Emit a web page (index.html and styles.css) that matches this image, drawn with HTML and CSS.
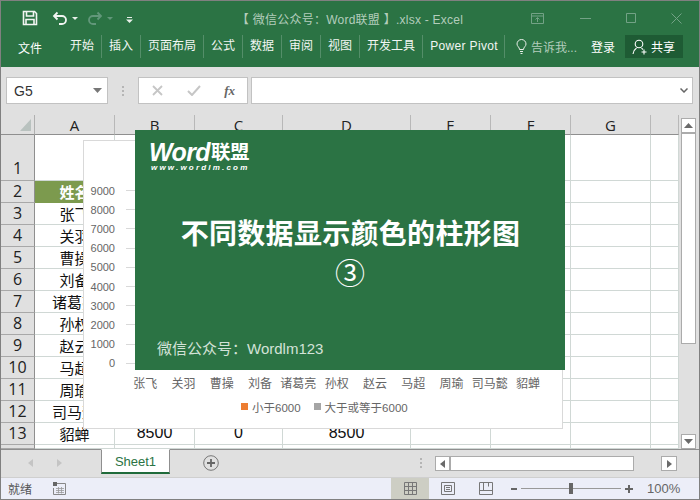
FILE: index.html
```html
<!DOCTYPE html>
<html lang="zh-CN">
<head>
<meta charset="utf-8">
<title>Excel</title>
<link rel="stylesheet" href="styles.css">
</head>
<body>
<div class="window">
  <header class="head">
    <div class="titlebar">
      <div class="qat">
        <svg class="ic-save" width="16" height="16" viewBox="0 0 16 16"><path d="M1.500 1.500h11l2 2v11h-13z" fill="none" stroke="#f1f5f2" stroke-width="1.600"/><path d="M4.500 1.500v4.500h7v-4.500M4 14.500v-5h8v5" fill="none" stroke="#f1f5f2" stroke-width="1.600"/></svg>
        <svg class="ic-undo" width="16" height="14" viewBox="0 0 16 14"><path d="M5.500 1.500 2 5l3.500 3.500M2.500 5H10a4 4 0 0 1 0 8H7" fill="none" stroke="#f1f5f2" stroke-width="1.800"/></svg>
        <svg class="ic-drop" width="6" height="3" viewBox="0 0 6 3"><path d="M0 0h6L3 3z" fill="#e8efe9"/></svg>
        <svg class="ic-redo" width="16" height="14" viewBox="0 0 16 14"><path d="M10.500 1.500 14 5l-3.500 3.500M13.500 5H6a4 4 0 0 0 0 8h3" fill="none" stroke="#62977a" stroke-width="1.800"/></svg>
        <svg class="ic-drop" width="6" height="3" viewBox="0 0 6 3"><path d="M0 0h6L3 3z" fill="#62977a"/></svg>
        <svg class="ic-custom" width="7" height="6" viewBox="0 0 7 6"><path d="M1 .5h5" stroke="#e8efe9"/><path d="M0 2.500h7L3.500 6z" fill="#e8efe9"/></svg>
      </div>
      <div class="doc-title">【 微信公众号：Word联盟 】.xlsx - Excel</div>
      <div class="winbtns">
        <svg width="13" height="11" viewBox="0 0 13 11"><path d="M.5.500h12v10H.5zM.5 3h12M6.500 9V5M4.500 6.500l2-2 2 2" fill="none" stroke="#73a286"/></svg>
        <svg class="btn-min" width="11" height="1" viewBox="0 0 11 1"><path d="M0 .5h11" stroke="#73a286"/></svg>
        <svg class="btn-max" width="10" height="10" viewBox="0 0 10 10"><path d="M.5.500h9v9h-9z" fill="none" stroke="#73a286"/></svg>
        <svg class="btn-close" width="11" height="11" viewBox="0 0 11 11"><path d="M.5.500l10 10M10.500.5l-10 10" stroke="#73a286"/></svg>
      </div>
    </div>
    <nav class="ribbon">
      <span class="tab-file">文件</span>
      <div class="tabs">
        <span class="tab">开始</span><span class="tab">插入</span><span class="tab">页面布局</span><span class="tab">公式</span><span class="tab">数据</span><span class="tab">审阅</span><span class="tab">视图</span><span class="tab">开发工具</span><span class="tab tab-en">Power Pivot</span>
      </div>
      <svg class="bulb" width="11" height="15" viewBox="0 0 11 15"><path d="M3.500 10.500C3.500 8 1 7.500 1 5a4.500 4.500 0 0 1 9 0c0 2.500-2.500 3-2.500 5.500zM4 12.500h3M4.500 14.500h2" fill="none" stroke="#e8efe9"/></svg>
      <span class="tell">告诉我...</span>
      <span class="login">登录</span>
      <span class="share">
        <svg width="16" height="16" viewBox="0 0 16 16"><circle cx="7" cy="5" r="3.800" fill="none" stroke="#fff" stroke-width="1.100"/><path d="M1 15c.5-3.500 2-5 3.500-6M9.500 9.200 11 10.500M12 10.500v5M9.500 13h5" fill="none" stroke="#fff" stroke-width="1.100"/></svg>
        共享
      </span>
    </nav>
  </header>

  <div class="formula">
    <div class="namebox"><span>G5</span><svg width="9" height="5" viewBox="0 0 9 5"><path d="M0 0h9L4.500 5z" fill="#777"/></svg></div>
    <div class="grip"><i></i><i></i><i></i></div>
    <div class="fxbox">
      <svg width="11" height="11" viewBox="0 0 11 11"><path d="M1 1l9 9M10 1l-9 9" stroke="#c6c6c6" stroke-width="1.800"/></svg>
      <svg width="14" height="11" viewBox="0 0 14 11"><path d="M1 6l4 4 8-9" fill="none" stroke="#c6c6c6" stroke-width="2"/></svg>
      <span class="fx">fx</span>
    </div>
    <div class="input"><svg width="8" height="5" viewBox="0 0 8 5"><path d="M.5.500 4 4 7.500.5" fill="none" stroke="#666" stroke-width="1.500"/></svg></div>
  </div>

  <div class="workarea">
    <div class="sheet">
      <div class="grid">
        <div class="corner"><svg width="11" height="12" viewBox="0 0 11 12"><path d="M11 0v12H0z" fill="#b9c2bf"/></svg></div>
        <div class="ch">A</div><div class="ch">B</div><div class="ch">C</div><div class="ch">D</div><div class="ch">E</div><div class="ch">F</div><div class="ch">G</div><div class="ch"></div>

        <div class="rh rh-tall">1</div><div class="c"></div><div class="c"></div><div class="c"></div><div class="c"></div><div class="c"></div><div class="c"></div><div class="c"></div><div class="c"></div>
        <div class="rh">2</div><div class="c c-head">姓名</div><div class="c"></div><div class="c"></div><div class="c"></div><div class="c"></div><div class="c"></div><div class="c"></div><div class="c"></div>
        <div class="rh">3</div><div class="c">张飞</div><div class="c"></div><div class="c"></div><div class="c"></div><div class="c"></div><div class="c"></div><div class="c"></div><div class="c"></div>
        <div class="rh">4</div><div class="c">关羽</div><div class="c"></div><div class="c"></div><div class="c"></div><div class="c"></div><div class="c"></div><div class="c"></div><div class="c"></div>
        <div class="rh">5</div><div class="c">曹操</div><div class="c"></div><div class="c"></div><div class="c"></div><div class="c"></div><div class="c"></div><div class="c"></div><div class="c"></div>
        <div class="rh">6</div><div class="c">刘备</div><div class="c"></div><div class="c"></div><div class="c"></div><div class="c"></div><div class="c"></div><div class="c"></div><div class="c"></div>
        <div class="rh">7</div><div class="c">诸葛亮</div><div class="c"></div><div class="c"></div><div class="c"></div><div class="c"></div><div class="c"></div><div class="c"></div><div class="c"></div>
        <div class="rh">8</div><div class="c">孙权</div><div class="c"></div><div class="c"></div><div class="c"></div><div class="c"></div><div class="c"></div><div class="c"></div><div class="c"></div>
        <div class="rh">9</div><div class="c">赵云</div><div class="c"></div><div class="c"></div><div class="c"></div><div class="c"></div><div class="c"></div><div class="c"></div><div class="c"></div>
        <div class="rh">10</div><div class="c">马超</div><div class="c"></div><div class="c"></div><div class="c"></div><div class="c"></div><div class="c"></div><div class="c"></div><div class="c"></div>
        <div class="rh">11</div><div class="c">周瑜</div><div class="c"></div><div class="c"></div><div class="c"></div><div class="c"></div><div class="c"></div><div class="c"></div><div class="c"></div>
        <div class="rh">12</div><div class="c">司马懿</div><div class="c"></div><div class="c"></div><div class="c"></div><div class="c"></div><div class="c"></div><div class="c"></div><div class="c"></div>
        <div class="rh">13</div><div class="c">貂蝉</div><div class="c c-num">8500</div><div class="c c-num">0</div><div class="c c-num">8500</div><div class="c"></div><div class="c"></div><div class="c"></div><div class="c"></div>
        <div class="rh"></div><div class="c"></div><div class="c"></div><div class="c"></div><div class="c"></div><div class="c"></div><div class="c"></div><div class="c"></div><div class="c"></div>
      </div>

      <div class="chart">
        <div class="axis">
          <div class="tick"><span>9000</span><i></i></div>
          <div class="tick"><span>8000</span><i></i></div>
          <div class="tick"><span>7000</span><i></i></div>
          <div class="tick"><span>6000</span><i></i></div>
          <div class="tick"><span>5000</span><i></i></div>
          <div class="tick"><span>4000</span><i></i></div>
          <div class="tick"><span>3000</span><i></i></div>
          <div class="tick"><span>2000</span><i></i></div>
          <div class="tick"><span>1000</span><i></i></div>
          <div class="tick"><span>0</span><i></i></div>
        </div>
        <div class="cats">
          <span>张飞</span><span>关羽</span><span>曹操</span><span>刘备</span><span>诸葛亮</span><span>孙权</span><span>赵云</span><span>马超</span><span>周瑜</span><span>司马懿</span><span>貂蝉</span>
        </div>
        <div class="legend">
          <i class="sw sw-orange"></i><span>小于6000</span>
          <i class="sw sw-gray"></i><span>大于或等于6000</span>
        </div>
      </div>

      <div class="banner">
        <div class="logo">
          <div class="logo-main"><span class="logo-word">Word</span><span class="logo-cn">联盟</span></div>
          <div class="logo-url">www.wordlm.com</div>
        </div>
        <h1 class="b-title">不同数据显示颜色的柱形图</h1>
        <div class="b-num">③</div>
        <div class="b-foot">微信公众号：Wordlm123</div>
      </div>
    </div>

    <div class="vscroll">
      <div class="sbtn"><svg width="9" height="5" viewBox="0 0 9 5"><path d="M4.500 0 9 5H0z" fill="#6a6a6a"/></svg></div>
      <div class="vthumb"></div>
      <div class="vtrack"></div>
      <div class="sbtn"><svg width="9" height="5" viewBox="0 0 9 5"><path d="M0 0h9L4.500 5z" fill="#6a6a6a"/></svg></div>
    </div>
  </div>

  <div class="tabbar">
    <div class="nav">
      <svg width="5" height="8" viewBox="0 0 5 8"><path d="M5 0v8L0 4z" fill="#c4c4c4"/></svg>
      <svg width="5" height="8" viewBox="0 0 5 8"><path d="M0 0v8l5-4z" fill="#c4c4c4"/></svg>
    </div>
    <div class="sheet-tab">Sheet1</div>
    <svg class="plus" width="16" height="16" viewBox="0 0 16 16"><circle cx="8" cy="8" r="7.300" fill="none" stroke="#777"/><path d="M8 4v8M4 8h8" stroke="#666" stroke-width="1.800"/></svg>
    <div class="grip grip-h"><i></i><i></i><i></i></div>
    <div class="hscroll">
      <div class="hbtn"><svg width="5" height="8" viewBox="0 0 5 8"><path d="M5 0v8L0 4z" fill="#6a6a6a"/></svg></div>
      <div class="hthumb"></div>
      <div class="htrack"></div>
      <div class="hbtn hbtn-r"><svg width="5" height="8" viewBox="0 0 5 8"><path d="M0 0v8l5-4z" fill="#6a6a6a"/></svg></div>
    </div>
  </div>

  <footer class="status">
    <span class="ready">就绪</span>
    <svg class="macro" width="13" height="13" viewBox="0 0 13 13"><path d="M3 1.500h9.500v11H.5V6" fill="none" stroke="#888"/><path d="M0 0h4v4H0z" fill="#666"/><path d="M3 6.500h8M3 8.500h8M3 10.500h8M5.500 5v6.500M8.500 5v6.500" stroke="#999" stroke-width=".8"/></svg>
    <div class="view view-on"><svg width="13" height="13" viewBox="0 0 13 13"><path d="M.5.500h12v12H.5zM.5 4.500h12M.5 8.500h12M4.500.500v12M8.500.500v12" fill="none" stroke="#777"/></svg></div>
    <div class="view"><svg width="14" height="13" viewBox="0 0 14 13"><path d="M.5.500h13v12H.5zM3.500 3.500h7v6h-7zM5 5.500h4M5 7.500h4" fill="none" stroke="#777"/></svg></div>
    <div class="view"><svg width="14" height="13" viewBox="0 0 14 13"><path d="M.5.500h13v12H.5zM.5 8.500h13M4.500.500v8M9.500.500v4" fill="none" stroke="#777"/></svg></div>
    <div class="zoom">
      <i class="z-minus"></i>
      <div class="z-track"><i class="z-thumb"></i></div>
      <svg class="z-plus" width="8" height="8" viewBox="0 0 8 8"><path d="M0 4h8M4 0v8" stroke="#666" stroke-width="2"/></svg>
      <span class="z-pct">100%</span>
    </div>
  </footer>
</div>
</body>
</html>
```
FILE: styles.css
```css
* { box-sizing: border-box; }
html, body { margin: 0; padding: 0; }
body { font-family: "Liberation Sans", "Noto Sans CJK SC", sans-serif; background: #fff; overflow: hidden; }
i { display: block; }

.window {
  width: 700px; height: 500px; border: 1px solid #808080; background: #e0e0e0;
  display: flex; flex-direction: column; overflow: hidden;
}

/* Title + ribbon */
.head { background: #2b7344; height: 66px; flex: none; color: #fff; }
.titlebar { height: 34px; display: grid; grid-template-columns: 1fr auto 1fr; align-items: center; }
.qat { display: flex; align-items: center; padding-left: 21px; height: 30px; }
.ic-save { margin-right: 14px; }
.ic-undo { margin-right: 4px; }
.ic-drop { margin-right: 9px; }
.ic-redo { margin-right: 4px; }
.ic-custom { margin-left: 4px; margin-top: 3px; }
.doc-title { font-size: 12px; color: #b3cdbc; padding-top: 1px; white-space: nowrap; letter-spacing: .25px; }
.winbtns { display: flex; align-items: center; justify-content: flex-end; height: 30px; padding-right: 17px; }
.btn-min { margin-left: 36px; }
.btn-max { margin-left: 35px; }
.btn-close { margin-left: 35px; }

.ribbon { height: 32px; display: flex; align-items: center; font-size: 12px; padding-bottom: 9px; }
.tab-file { width: 58px; margin-right: 4px; text-align: center; padding-top: 1px; color: #fff; }
.tabs { display: flex; align-items: center; }
.tab { padding: 0 7px; line-height: 23px; height: 23px; border-right: 1px solid #548e69; color: #f2f6f3; white-space: nowrap; }
.tab:last-child { padding-right: 6px; }
.tab-en { letter-spacing: .35px; }
.bulb { margin-left: 11px; }
.tell { margin-left: 4px; color: #b3cdbc; width: 60px; white-space: nowrap; }
.login { color: #fff; width: 34px; }
.share {
  background: #1e5b34; height: 23px; width: 58px; display: flex; align-items: center; gap: 3px;
  padding-left: 7px; color: #fff; white-space: nowrap;
}

/* Formula bar */
.formula { height: 48px; flex: none; display: flex; padding: 10px 6px 11px 5px; align-items: stretch; }
.namebox {
  width: 102px; background: #fff; border: 1px solid #c2c2c2; display: flex; align-items: center;
  justify-content: space-between; padding: 0 5px 0 7px; font-size: 14px; color: #333;
}
.grip { width: 30px; display: flex; flex-direction: column; gap: 2px; align-items: center; justify-content: center; }
.grip i { width: 2px; height: 2px; background: #b5b5b5; }
.fxbox {
  width: 110px; background: #fff; border: 1px solid #c2c2c2; display: flex; align-items: center;
  justify-content: space-between; padding: 0 12px 0 13px;
}
.fx { font-family: "Liberation Serif", serif; font-style: italic; font-weight: bold; font-size: 13px; color: #666; }
.input {
  margin-left: 3px; flex: 1; background: #fff; border: 1px solid #c2c2c2; display: flex; align-items: center;
  justify-content: flex-end; padding-right: 4px;
}

/* Sheet */
.workarea { height: 334px; flex: none; display: flex; }
.sheet { position: relative; width: 678px; height: 334px; overflow: hidden; }
.grid {
  display: grid; grid-template-columns: 34px 80px 80px 88px 128px 80px 80px 80px 28px;
  grid-template-rows: 20px 46px repeat(12, 22px) 4px;
  border-right: 1px solid #8f8f8f;
  background: #fff;
}
.corner { background: #e0e0e0; border-right: 1px solid #b0b0b0; border-bottom: 1px solid #8f8f8f; display: flex; justify-content: flex-end; align-items: flex-end; padding: 0 3px 3px 0; }
.ch {
  background: #e0e0e0; border-bottom: 1px solid #8f8f8f; border-right: 1px solid #b8b8b8;
  text-align: center; font-size: 15px; line-height: 20px; color: #222; overflow: hidden; font-family: "Open Sans", sans-serif;
}
.rh {
  background: #e0e0e0; border-bottom: 1px solid #a8a8a8; border-right: 1px solid #8f8f8f;
  display: flex; align-items: center; justify-content: center; font-size: 16px; line-height: 20px; padding-bottom: 2px; color: #222; font-family: "Open Sans", sans-serif; overflow: hidden;
}
.rh-tall { align-items: flex-end; }
.c {
  background: #fff; border-right: 1px solid #d0d8d5; border-bottom: 1px solid #d0d8d5; padding-bottom: 1px;
  display: flex; align-items: center; justify-content: center; font-size: 15px; color: #111; overflow: hidden; white-space: nowrap;
}
.c-num { font-size: 16px; }
.c-head { background: #7c9a4e; color: #fff; font-weight: bold; border-color: #7c9a4e; }

.chart {
  position: absolute; left: 82px; top: 25px; width: 480px; height: 289px;
  background: #fff; border: 1px solid #d9d9d9; padding-top: 40px;
  display: flex; flex-direction: column; font-size: 11px; color: #666;
}
.axis { display: flex; flex-direction: column; }
.tick { height: 19.2px; display: flex; align-items: center; }
.tick span { width: 31px; text-align: right; }
.tick i { margin-left: 11px; flex: 1; height: 1px; background: #d9d9d9; }
.cats { display: grid; grid-template-columns: repeat(11, 38.3px); margin-left: 42px; height: 17px; align-items: center; justify-items: center; white-space: nowrap; font-size: 12px; padding-top: 1px; }
.legend { display: flex; align-items: center; margin: 9px 0 0 157px; height: 16px; font-size: 11.5px; }
.sw { width: 7px; height: 7px; margin-right: 4px; }
.sw-orange { background: #ed7d31; }
.sw-gray { background: #a5a5a5; margin-left: 13px; }

.banner {
  position: absolute; left: 134px; top: 15px; width: 430px; height: 240px;
  background: #2b7344; color: #fff; display: flex; flex-direction: column;
}
.logo { padding: 10px 0 0 14px; height: 85px; }
.logo-main { display: flex; align-items: center; height: 24px; line-height: 24px; white-space: nowrap; }
.logo-word { font-style: italic; font-weight: bold; font-size: 25px; letter-spacing: -.6px; }
.logo-cn { font-weight: bold; font-size: 19.500px; margin-left: 1px; letter-spacing: -.4px; }
.logo-url { font-size: 8px; font-weight: bold; font-style: italic; letter-spacing: 2.200px; line-height: 8px; margin: 0 0 0 2px; white-space: nowrap; }
.b-title { margin: 0 0 0 1px; font-size: 28px; line-height: 40px; font-weight: bold; text-align: center; letter-spacing: .3px; white-space: nowrap; }
.b-num { text-align: center; font-size: 30px; line-height: 34px; font-family: "Noto Sans CJK SC", sans-serif; height: 34px; margin-top: -1px; }
.b-foot { margin-top: auto; padding: 0 0 10px 22px; font-size: 15px; line-height: 22px; color: #d3e2d8; white-space: nowrap; }

/* Vertical scrollbar */
.vscroll { flex: 1; display: flex; flex-direction: column; align-items: center; padding: 3px 1px 0 0; }
.sbtn { width: 15px; height: 15px; background: #fff; border: 1px solid #ababab; display: flex; align-items: center; justify-content: center; flex: none; }
.vthumb { width: 15px; height: 211px; background: #fff; border: 1px solid #ababab; flex: none; }
.vtrack { flex: 1; }

/* Tab bar */
.tabbar { height: 28px; flex: none; border-top: 1px solid #8f8f8f; display: flex; align-items: flex-start; }
.nav { width: 100px; height: 26px; display: flex; align-items: center; padding-left: 27px; gap: 24px; }
.sheet-tab {
  width: 69px; height: 25px; margin-top: -1px; background: #fff; border: 1px solid #8f8f8f; border-top: 1px solid #fff;
  border-bottom: 2px solid #1f6b3a; text-align: center; color: #2b7344; font-size: 13px; line-height: 23px;
}
.plus { margin: 5px 0 0 33px; }
.grip-h { width: 20px; height: 26px; margin-left: 192px; }
.hscroll { display: flex; margin: 6px 0 0 4px; height: 15px; width: 242px; }
.hbtn { width: 15px; height: 15px; background: #fff; border: 1px solid #ababab; display: flex; align-items: center; justify-content: center; flex: none; }
.hthumb { width: 184px; height: 15px; background: #fff; border: 1px solid #ababab; flex: none; }
.htrack { flex: 1; }
.hbtn-r { width: 16px; }

/* Status bar */
.status { height: 22px; flex: none; background: #eceef8; border-top: 1px solid #cfcfcf; display: flex; align-items: center; font-size: 12px; color: #555; }
.ready { margin-left: 7px; width: 45px; }
.macro { margin-right: 325px; }
.view { width: 38px; height: 21px; display: flex; align-items: center; justify-content: center; }
.view-on { background: #cdcec4; }
.zoom { display: flex; align-items: center; margin-left: 6px; }
.z-minus { width: 6px; height: 2px; background: #666; }
.z-track { width: 100px; height: 1px; background: #999; margin-left: 4px; position: relative; }
.z-thumb { position: absolute; left: 48px; top: -5px; width: 4px; height: 11px; background: #666; }
.z-plus { margin-left: 4px; }
.z-pct { margin-left: 14px; font-size: 13px; color: #666; }
```
